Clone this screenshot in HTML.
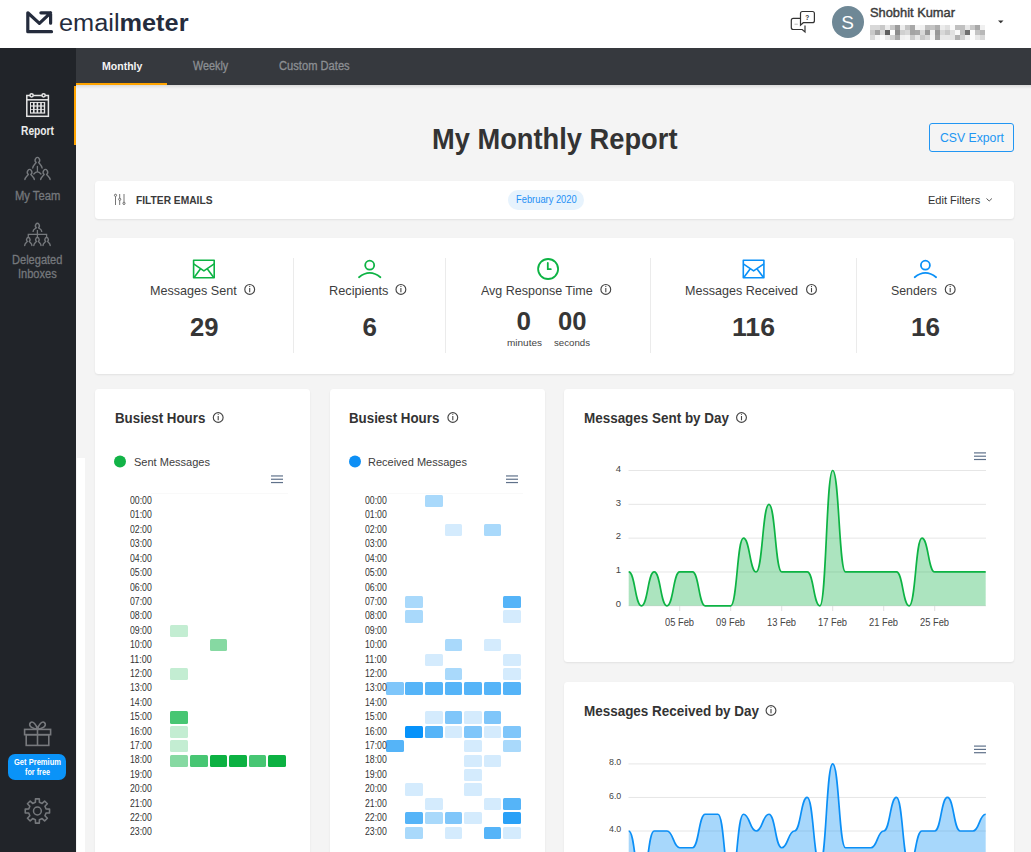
<!DOCTYPE html>
<html><head><meta charset="utf-8"><style>
html,body{margin:0;padding:0;}
body{width:1031px;height:852px;overflow:hidden;position:relative;background:#f4f4f4;font-family:"Liberation Sans",sans-serif;}
.r{position:absolute;}
.t{position:absolute;white-space:nowrap;line-height:1;}
.ov{position:absolute;left:0;top:0;}
</style></head><body>
<div class="r" style="left:0px;top:0px;width:1031px;height:48px;background:#ffffff;"></div>
<div class="r" style="left:0px;top:48px;width:76px;height:804px;background:#212429;"></div>
<div class="r" style="left:76px;top:48px;width:955px;height:36.5px;background:#36393e;"></div>
<div class="r" style="left:76px;top:83px;width:91px;height:2px;background:#ffa400;"></div>
<div class="r" style="left:74px;top:85.8px;width:2px;height:58.8px;background:#ffa400;"></div>
<div class="r" style="left:77px;top:458px;width:8px;height:394px;background:#ffffff;"></div>
<div class="r" style="left:76px;top:85px;width:955px;height:4px;background:linear-gradient(rgba(0,0,0,0.10),rgba(0,0,0,0));"></div>
<div class="r" style="left:95px;top:181px;width:919px;height:38px;background:#fff;border-radius:3.5px;box-shadow:0 1px 2px rgba(0,0,0,0.08);"></div>
<div class="r" style="left:95px;top:238px;width:919px;height:136px;background:#fff;border-radius:3.5px;box-shadow:0 1px 2px rgba(0,0,0,0.08);"></div>
<div class="r" style="left:95px;top:389px;width:215px;height:480px;background:#fff;border-radius:3.5px;box-shadow:0 1px 2px rgba(0,0,0,0.08);"></div>
<div class="r" style="left:330px;top:389px;width:215px;height:480px;background:#fff;border-radius:3.5px;box-shadow:0 1px 2px rgba(0,0,0,0.08);"></div>
<div class="r" style="left:564px;top:389px;width:450px;height:272.5px;background:#fff;border-radius:3.5px;box-shadow:0 1px 2px rgba(0,0,0,0.08);"></div>
<div class="r" style="left:564px;top:682px;width:450px;height:300px;background:#fff;border-radius:3.5px;box-shadow:0 1px 2px rgba(0,0,0,0.08);"></div>
<div class="r" style="left:928.6px;top:123.2px;width:85.4px;height:28.4px;background:transparent;border:1px solid #2196f3;border-radius:3px;box-sizing:border-box;"></div>
<div class="r" style="left:507.6px;top:189.8px;width:76.7px;height:20.2px;background:#e7f3fd;border-radius:10px;"></div>
<div class="r" style="left:8px;top:754px;width:58px;height:26px;background:#0a93f8;border-radius:7px;"></div>
<div class="r" style="left:831.6px;top:5.8px;width:32px;height:32px;background:#6f8896;border-radius:50%;"></div>
<div class="r" style="left:293px;top:258px;width:1px;height:95px;background:#ebebeb;"></div>
<div class="r" style="left:445px;top:258px;width:1px;height:95px;background:#ebebeb;"></div>
<div class="r" style="left:650px;top:258px;width:1px;height:95px;background:#ebebeb;"></div>
<div class="r" style="left:856px;top:258px;width:1px;height:95px;background:#ebebeb;"></div>
<div class="r" style="left:870px;top:25px;width:5px;height:5px;background:#d8d8d8;"></div>
<div class="r" style="left:875px;top:25px;width:5px;height:5px;background:#d8d8d8;"></div>
<div class="r" style="left:880px;top:25px;width:5px;height:5px;background:#c8c8c8;"></div>
<div class="r" style="left:885px;top:25px;width:5px;height:5px;background:#ececec;"></div>
<div class="r" style="left:890px;top:25px;width:5px;height:5px;background:#c8c8c8;"></div>
<div class="r" style="left:895px;top:25px;width:5px;height:5px;background:#9c9c9c;"></div>
<div class="r" style="left:900px;top:25px;width:5px;height:5px;background:#ececec;"></div>
<div class="r" style="left:905px;top:25px;width:5px;height:5px;background:#c4c4c4;"></div>
<div class="r" style="left:910px;top:25px;width:5px;height:5px;background:#a8a8a8;"></div>
<div class="r" style="left:915px;top:25px;width:5px;height:5px;background:#f4f4f4;"></div>
<div class="r" style="left:920px;top:25px;width:5px;height:5px;background:#f0f0f0;"></div>
<div class="r" style="left:925px;top:25px;width:5px;height:5px;background:#c0c0c0;"></div>
<div class="r" style="left:930px;top:25px;width:5px;height:5px;background:#c4c4c4;"></div>
<div class="r" style="left:935px;top:25px;width:5px;height:5px;background:#aeaeae;"></div>
<div class="r" style="left:940px;top:25px;width:5px;height:5px;background:#ececec;"></div>
<div class="r" style="left:945px;top:25px;width:5px;height:5px;background:#e0e0e0;"></div>
<div class="r" style="left:950px;top:25px;width:5px;height:5px;background:#fafafa;"></div>
<div class="r" style="left:955px;top:25px;width:5px;height:5px;background:#c0c0c0;"></div>
<div class="r" style="left:960px;top:25px;width:5px;height:5px;background:#c0c0c0;"></div>
<div class="r" style="left:965px;top:25px;width:5px;height:5px;background:#e8e8e8;"></div>
<div class="r" style="left:970px;top:25px;width:5px;height:5px;background:#c8c8c8;"></div>
<div class="r" style="left:975px;top:25px;width:5px;height:5px;background:#a8a8a8;"></div>
<div class="r" style="left:980px;top:25px;width:5px;height:5px;background:#f0f0f0;"></div>
<div class="r" style="left:870px;top:30px;width:5px;height:5px;background:#c8c8c8;"></div>
<div class="r" style="left:875px;top:30px;width:5px;height:5px;background:#a0a0a0;"></div>
<div class="r" style="left:880px;top:30px;width:5px;height:5px;background:#d8d8d8;"></div>
<div class="r" style="left:885px;top:30px;width:5px;height:5px;background:#606060;"></div>
<div class="r" style="left:890px;top:30px;width:5px;height:5px;background:#fcfcfc;"></div>
<div class="r" style="left:895px;top:30px;width:5px;height:5px;background:#8c8c8c;"></div>
<div class="r" style="left:900px;top:30px;width:5px;height:5px;background:#d0d0d0;"></div>
<div class="r" style="left:905px;top:30px;width:5px;height:5px;background:#d8d8d8;"></div>
<div class="r" style="left:910px;top:30px;width:5px;height:5px;background:#a4a4a4;"></div>
<div class="r" style="left:915px;top:30px;width:5px;height:5px;background:#a8a8a8;"></div>
<div class="r" style="left:920px;top:30px;width:5px;height:5px;background:#d8d8d8;"></div>
<div class="r" style="left:925px;top:30px;width:5px;height:5px;background:#989898;"></div>
<div class="r" style="left:930px;top:30px;width:5px;height:5px;background:#f0f0f0;"></div>
<div class="r" style="left:935px;top:30px;width:5px;height:5px;background:#989898;"></div>
<div class="r" style="left:940px;top:30px;width:5px;height:5px;background:#d8d8d8;"></div>
<div class="r" style="left:945px;top:30px;width:5px;height:5px;background:#c8c8c8;"></div>
<div class="r" style="left:950px;top:30px;width:5px;height:5px;background:#e0e0e0;"></div>
<div class="r" style="left:955px;top:30px;width:5px;height:5px;background:#f8f8f8;"></div>
<div class="r" style="left:960px;top:30px;width:5px;height:5px;background:#c0c0c0;"></div>
<div class="r" style="left:965px;top:30px;width:5px;height:5px;background:#707070;"></div>
<div class="r" style="left:970px;top:30px;width:5px;height:5px;background:#fcfcfc;"></div>
<div class="r" style="left:975px;top:30px;width:5px;height:5px;background:#c4c4c4;"></div>
<div class="r" style="left:980px;top:30px;width:5px;height:5px;background:#b8b8b8;"></div>
<div class="r" style="left:870px;top:35px;width:5px;height:5px;background:#d8d8d8;"></div>
<div class="r" style="left:875px;top:35px;width:5px;height:5px;background:#f4f4f4;"></div>
<div class="r" style="left:880px;top:35px;width:5px;height:5px;background:#fcfcfc;"></div>
<div class="r" style="left:885px;top:35px;width:5px;height:5px;background:#e8e8e8;"></div>
<div class="r" style="left:890px;top:35px;width:5px;height:5px;background:#d0d0d0;"></div>
<div class="r" style="left:895px;top:35px;width:5px;height:5px;background:#a8a8a8;"></div>
<div class="r" style="left:900px;top:35px;width:5px;height:5px;background:#f0f0f0;"></div>
<div class="r" style="left:905px;top:35px;width:5px;height:5px;background:#f4f4f4;"></div>
<div class="r" style="left:910px;top:35px;width:5px;height:5px;background:#cccccc;"></div>
<div class="r" style="left:915px;top:35px;width:5px;height:5px;background:#e8e8e8;"></div>
<div class="r" style="left:920px;top:35px;width:5px;height:5px;background:#c8c8c8;"></div>
<div class="r" style="left:925px;top:35px;width:5px;height:5px;background:#d8d8d8;"></div>
<div class="r" style="left:930px;top:35px;width:5px;height:5px;background:#f4f4f4;"></div>
<div class="r" style="left:935px;top:35px;width:5px;height:5px;background:#a0a0a0;"></div>
<div class="r" style="left:940px;top:35px;width:5px;height:5px;background:#e8e8e8;"></div>
<div class="r" style="left:945px;top:35px;width:5px;height:5px;background:#e8e8e8;"></div>
<div class="r" style="left:950px;top:35px;width:5px;height:5px;background:#e4e4e4;"></div>
<div class="r" style="left:955px;top:35px;width:5px;height:5px;background:#b0b0b0;"></div>
<div class="r" style="left:960px;top:35px;width:5px;height:5px;background:#d0d0d0;"></div>
<div class="r" style="left:965px;top:35px;width:5px;height:5px;background:#f0f0f0;"></div>
<div class="r" style="left:970px;top:35px;width:5px;height:5px;background:#fcfcfc;"></div>
<div class="r" style="left:975px;top:35px;width:5px;height:5px;background:#e8e8e8;"></div>
<div class="r" style="left:980px;top:35px;width:5px;height:5px;background:#d8d8d8;"></div>
<div class="r" style="left:170.25px;top:624.75px;width:17.85px;height:12.4px;background:#c3edd2;border-radius:1.5px;"></div>
<div class="r" style="left:209.5px;top:639.0px;width:17.85px;height:12.4px;background:#86d9a2;border-radius:1.5px;"></div>
<div class="r" style="left:170.25px;top:668.0px;width:17.85px;height:12.4px;background:#c3edd2;border-radius:1.5px;"></div>
<div class="r" style="left:170.25px;top:711.25px;width:17.85px;height:12.4px;background:#47c673;border-radius:1.5px;"></div>
<div class="r" style="left:170.25px;top:725.5px;width:17.85px;height:12.4px;background:#c3edd2;border-radius:1.5px;"></div>
<div class="r" style="left:170.25px;top:740.0px;width:17.85px;height:12.4px;background:#c3edd2;border-radius:1.5px;"></div>
<div class="r" style="left:170.25px;top:754.5px;width:17.85px;height:12.4px;background:#86d9a2;border-radius:1.5px;"></div>
<div class="r" style="left:190.0px;top:754.5px;width:17.85px;height:12.4px;background:#47c673;border-radius:1.5px;"></div>
<div class="r" style="left:209.5px;top:754.5px;width:17.85px;height:12.4px;background:#0cb142;border-radius:1.5px;"></div>
<div class="r" style="left:229.0px;top:754.5px;width:17.85px;height:12.4px;background:#0cb142;border-radius:1.5px;"></div>
<div class="r" style="left:248.5px;top:754.5px;width:17.85px;height:12.4px;background:#47c673;border-radius:1.5px;"></div>
<div class="r" style="left:268.0px;top:754.5px;width:17.85px;height:12.4px;background:#0cb142;border-radius:1.5px;"></div>
<div class="r" style="left:425.0px;top:495.0px;width:17.85px;height:12.4px;background:#a9d9fb;border-radius:1.5px;"></div>
<div class="r" style="left:444.5px;top:523.75px;width:17.85px;height:12.4px;background:#d4ebfd;border-radius:1.5px;"></div>
<div class="r" style="left:483.5px;top:523.75px;width:17.85px;height:12.4px;background:#a9d9fb;border-radius:1.5px;"></div>
<div class="r" style="left:405.25px;top:595.75px;width:17.85px;height:12.4px;background:#a9d9fb;border-radius:1.5px;"></div>
<div class="r" style="left:503.0px;top:595.75px;width:17.85px;height:12.4px;background:#55b4f8;border-radius:1.5px;"></div>
<div class="r" style="left:405.25px;top:610.25px;width:17.85px;height:12.4px;background:#a9d9fb;border-radius:1.5px;"></div>
<div class="r" style="left:503.0px;top:610.25px;width:17.85px;height:12.4px;background:#d4ebfd;border-radius:1.5px;"></div>
<div class="r" style="left:444.5px;top:639.0px;width:17.85px;height:12.4px;background:#a9d9fb;border-radius:1.5px;"></div>
<div class="r" style="left:483.5px;top:639.0px;width:17.85px;height:12.4px;background:#d4ebfd;border-radius:1.5px;"></div>
<div class="r" style="left:425.0px;top:653.5px;width:17.85px;height:12.4px;background:#d4ebfd;border-radius:1.5px;"></div>
<div class="r" style="left:503.0px;top:653.5px;width:17.85px;height:12.4px;background:#d4ebfd;border-radius:1.5px;"></div>
<div class="r" style="left:444.5px;top:668.0px;width:17.85px;height:12.4px;background:#a9d9fb;border-radius:1.5px;"></div>
<div class="r" style="left:503.0px;top:668.0px;width:17.85px;height:12.4px;background:#d4ebfd;border-radius:1.5px;"></div>
<div class="r" style="left:385.75px;top:682.25px;width:17.85px;height:12.4px;background:#7fc6fa;border-radius:1.5px;"></div>
<div class="r" style="left:405.25px;top:682.25px;width:17.85px;height:12.4px;background:#55b4f8;border-radius:1.5px;"></div>
<div class="r" style="left:425.0px;top:682.25px;width:17.85px;height:12.4px;background:#55b4f8;border-radius:1.5px;"></div>
<div class="r" style="left:444.5px;top:682.25px;width:17.85px;height:12.4px;background:#55b4f8;border-radius:1.5px;"></div>
<div class="r" style="left:464.0px;top:682.25px;width:17.85px;height:12.4px;background:#55b4f8;border-radius:1.5px;"></div>
<div class="r" style="left:483.5px;top:682.25px;width:17.85px;height:12.4px;background:#55b4f8;border-radius:1.5px;"></div>
<div class="r" style="left:503.0px;top:682.25px;width:17.85px;height:12.4px;background:#55b4f8;border-radius:1.5px;"></div>
<div class="r" style="left:425.0px;top:711.25px;width:17.85px;height:12.4px;background:#d4ebfd;border-radius:1.5px;"></div>
<div class="r" style="left:444.5px;top:711.25px;width:17.85px;height:12.4px;background:#7fc6fa;border-radius:1.5px;"></div>
<div class="r" style="left:464.0px;top:711.25px;width:17.85px;height:12.4px;background:#d4ebfd;border-radius:1.5px;"></div>
<div class="r" style="left:483.5px;top:711.25px;width:17.85px;height:12.4px;background:#7fc6fa;border-radius:1.5px;"></div>
<div class="r" style="left:405.25px;top:725.5px;width:17.85px;height:12.4px;background:#0692fa;border-radius:1.5px;"></div>
<div class="r" style="left:425.0px;top:725.5px;width:17.85px;height:12.4px;background:#55b4f8;border-radius:1.5px;"></div>
<div class="r" style="left:444.5px;top:725.5px;width:17.85px;height:12.4px;background:#d4ebfd;border-radius:1.5px;"></div>
<div class="r" style="left:464.0px;top:725.5px;width:17.85px;height:12.4px;background:#7fc6fa;border-radius:1.5px;"></div>
<div class="r" style="left:483.5px;top:725.5px;width:17.85px;height:12.4px;background:#d4ebfd;border-radius:1.5px;"></div>
<div class="r" style="left:503.0px;top:725.5px;width:17.85px;height:12.4px;background:#7fc6fa;border-radius:1.5px;"></div>
<div class="r" style="left:385.75px;top:740.0px;width:17.85px;height:12.4px;background:#55b4f8;border-radius:1.5px;"></div>
<div class="r" style="left:464.0px;top:740.0px;width:17.85px;height:12.4px;background:#d4ebfd;border-radius:1.5px;"></div>
<div class="r" style="left:503.0px;top:740.0px;width:17.85px;height:12.4px;background:#a9d9fb;border-radius:1.5px;"></div>
<div class="r" style="left:464.0px;top:754.5px;width:17.85px;height:12.4px;background:#d4ebfd;border-radius:1.5px;"></div>
<div class="r" style="left:483.5px;top:754.5px;width:17.85px;height:12.4px;background:#d4ebfd;border-radius:1.5px;"></div>
<div class="r" style="left:464.0px;top:768.75px;width:17.85px;height:12.4px;background:#d4ebfd;border-radius:1.5px;"></div>
<div class="r" style="left:405.25px;top:783.25px;width:17.85px;height:12.4px;background:#d4ebfd;border-radius:1.5px;"></div>
<div class="r" style="left:464.0px;top:783.25px;width:17.85px;height:12.4px;background:#d4ebfd;border-radius:1.5px;"></div>
<div class="r" style="left:425.0px;top:797.5px;width:17.85px;height:12.4px;background:#d4ebfd;border-radius:1.5px;"></div>
<div class="r" style="left:483.5px;top:797.5px;width:17.85px;height:12.4px;background:#d4ebfd;border-radius:1.5px;"></div>
<div class="r" style="left:503.0px;top:797.5px;width:17.85px;height:12.4px;background:#55b4f8;border-radius:1.5px;"></div>
<div class="r" style="left:405.25px;top:812.0px;width:17.85px;height:12.4px;background:#55b4f8;border-radius:1.5px;"></div>
<div class="r" style="left:425.0px;top:812.0px;width:17.85px;height:12.4px;background:#a9d9fb;border-radius:1.5px;"></div>
<div class="r" style="left:444.5px;top:812.0px;width:17.85px;height:12.4px;background:#7fc6fa;border-radius:1.5px;"></div>
<div class="r" style="left:464.0px;top:812.0px;width:17.85px;height:12.4px;background:#d4ebfd;border-radius:1.5px;"></div>
<div class="r" style="left:503.0px;top:812.0px;width:17.85px;height:12.4px;background:#2aa1f7;border-radius:1.5px;"></div>
<div class="r" style="left:405.25px;top:826.5px;width:17.85px;height:12.4px;background:#a9d9fb;border-radius:1.5px;"></div>
<div class="r" style="left:444.5px;top:826.5px;width:17.85px;height:12.4px;background:#d4ebfd;border-radius:1.5px;"></div>
<div class="r" style="left:483.5px;top:826.5px;width:17.85px;height:12.4px;background:#55b4f8;border-radius:1.5px;"></div>
<div class="r" style="left:503.0px;top:826.5px;width:17.85px;height:12.4px;background:#d4ebfd;border-radius:1.5px;"></div>
<div class="r" style="left:150.5px;top:493px;width:137px;height:1px;background:#f9f9f9;"></div>
<div class="r" style="left:385.5px;top:493px;width:137px;height:1px;background:#f9f9f9;"></div>
<svg class="ov" width="1031" height="852" viewBox="0 0 1031 852"><line x1="628.5" y1="470.5" x2="986" y2="470.5" stroke="#e6e6e6" stroke-width="1"/>
<line x1="628.5" y1="504.325" x2="986" y2="504.325" stroke="#e6e6e6" stroke-width="1"/>
<line x1="628.5" y1="538.15" x2="986" y2="538.15" stroke="#e6e6e6" stroke-width="1"/>
<line x1="628.5" y1="571.975" x2="986" y2="571.975" stroke="#e6e6e6" stroke-width="1"/>
<line x1="628.5" y1="605.8" x2="986" y2="605.8" stroke="#e6e6e6" stroke-width="1"/>
<line x1="679.7" y1="606" x2="679.7" y2="611" stroke="#e0e0e0" stroke-width="1"/>
<line x1="730.7" y1="606" x2="730.7" y2="611" stroke="#e0e0e0" stroke-width="1"/>
<line x1="781.7" y1="606" x2="781.7" y2="611" stroke="#e0e0e0" stroke-width="1"/>
<line x1="832.7" y1="606" x2="832.7" y2="611" stroke="#e0e0e0" stroke-width="1"/>
<line x1="883.7" y1="606" x2="883.7" y2="611" stroke="#e0e0e0" stroke-width="1"/>
<line x1="934.7" y1="606" x2="934.7" y2="611" stroke="#e0e0e0" stroke-width="1"/>
<path d="M628.70,571.97 C635.08,571.97 635.08,605.80 641.45,605.80 C647.83,605.80 647.83,571.97 654.20,571.97 C660.58,571.97 660.58,605.80 666.95,605.80 C673.33,605.80 673.33,571.97 679.70,571.97 C686.08,571.97 686.08,571.97 692.45,571.97 C698.83,571.97 698.83,605.80 705.20,605.80 C711.58,605.80 711.58,605.80 717.95,605.80 C724.33,605.80 724.33,605.80 730.70,605.80 C737.08,605.80 737.08,538.15 743.45,538.15 C749.83,538.15 749.83,571.97 756.20,571.97 C762.58,571.97 762.58,504.32 768.95,504.32 C775.33,504.32 775.33,571.97 781.70,571.97 C788.08,571.97 788.08,571.97 794.45,571.97 C800.83,571.97 800.83,571.97 807.20,571.97 C813.58,571.97 813.58,605.80 819.95,605.80 C826.33,605.80 826.33,470.50 832.70,470.50 C839.08,470.50 839.08,571.97 845.45,571.97 C851.83,571.97 851.83,571.97 858.20,571.97 C864.58,571.97 864.58,571.97 870.95,571.97 C877.33,571.97 877.33,571.97 883.70,571.97 C890.08,571.97 890.08,571.97 896.45,571.97 C902.83,571.97 902.83,605.80 909.20,605.80 C915.58,605.80 915.58,538.15 921.95,538.15 C928.33,538.15 928.33,571.97 934.70,571.97 C941.08,571.97 941.08,571.97 947.45,571.97 C953.83,571.97 953.83,571.97 960.20,571.97 C966.58,571.97 966.58,571.97 972.95,571.97 C979.33,571.97 979.33,571.97 985.70,571.97 L985.7,605.8 L628.7,605.8 Z" fill="#12b347" fill-opacity="0.35"/>
<path d="M628.70,571.97 C635.08,571.97 635.08,605.80 641.45,605.80 C647.83,605.80 647.83,571.97 654.20,571.97 C660.58,571.97 660.58,605.80 666.95,605.80 C673.33,605.80 673.33,571.97 679.70,571.97 C686.08,571.97 686.08,571.97 692.45,571.97 C698.83,571.97 698.83,605.80 705.20,605.80 C711.58,605.80 711.58,605.80 717.95,605.80 C724.33,605.80 724.33,605.80 730.70,605.80 C737.08,605.80 737.08,538.15 743.45,538.15 C749.83,538.15 749.83,571.97 756.20,571.97 C762.58,571.97 762.58,504.32 768.95,504.32 C775.33,504.32 775.33,571.97 781.70,571.97 C788.08,571.97 788.08,571.97 794.45,571.97 C800.83,571.97 800.83,571.97 807.20,571.97 C813.58,571.97 813.58,605.80 819.95,605.80 C826.33,605.80 826.33,470.50 832.70,470.50 C839.08,470.50 839.08,571.97 845.45,571.97 C851.83,571.97 851.83,571.97 858.20,571.97 C864.58,571.97 864.58,571.97 870.95,571.97 C877.33,571.97 877.33,571.97 883.70,571.97 C890.08,571.97 890.08,571.97 896.45,571.97 C902.83,571.97 902.83,605.80 909.20,605.80 C915.58,605.80 915.58,538.15 921.95,538.15 C928.33,538.15 928.33,571.97 934.70,571.97 C941.08,571.97 941.08,571.97 947.45,571.97 C953.83,571.97 953.83,571.97 960.20,571.97 C966.58,571.97 966.58,571.97 972.95,571.97 C979.33,571.97 979.33,571.97 985.70,571.97" fill="none" stroke="#0db344" stroke-width="1.7"/>
<line x1="628.5" y1="763.9" x2="986" y2="763.9" stroke="#e6e6e6" stroke-width="1"/>
<line x1="628.5" y1="797.4499999999999" x2="986" y2="797.4499999999999" stroke="#e6e6e6" stroke-width="1"/>
<line x1="628.5" y1="831.0" x2="986" y2="831.0" stroke="#e6e6e6" stroke-width="1"/>
<line x1="628.5" y1="864.55" x2="986" y2="864.55" stroke="#e6e6e6" stroke-width="1"/>
<path d="M628.70,831.00 C635.08,831.00 635.08,881.32 641.45,881.32 C647.83,881.32 647.83,831.00 654.20,831.00 C660.58,831.00 660.58,831.00 666.95,831.00 C673.33,831.00 673.33,847.77 679.70,847.77 C686.08,847.77 686.08,847.77 692.45,847.77 C698.83,847.77 698.83,814.23 705.20,814.23 C711.58,814.23 711.58,814.23 717.95,814.23 C724.33,814.23 724.33,881.32 730.70,881.32 C737.08,881.32 737.08,814.23 743.45,814.23 C749.83,814.23 749.83,831.00 756.20,831.00 C762.58,831.00 762.58,814.23 768.95,814.23 C775.33,814.23 775.33,847.77 781.70,847.77 C788.08,847.77 788.08,831.00 794.45,831.00 C800.83,831.00 800.83,797.45 807.20,797.45 C813.58,797.45 813.58,864.55 819.95,864.55 C826.33,864.55 826.33,763.90 832.70,763.90 C839.08,763.90 839.08,847.77 845.45,847.77 C851.83,847.77 851.83,847.77 858.20,847.77 C864.58,847.77 864.58,847.77 870.95,847.77 C877.33,847.77 877.33,831.00 883.70,831.00 C890.08,831.00 890.08,797.45 896.45,797.45 C902.83,797.45 902.83,864.55 909.20,864.55 C915.58,864.55 915.58,831.00 921.95,831.00 C928.33,831.00 928.33,831.00 934.70,831.00 C941.08,831.00 941.08,797.45 947.45,797.45 C953.83,797.45 953.83,831.00 960.20,831.00 C966.58,831.00 966.58,831.00 972.95,831.00 C979.33,831.00 979.33,814.23 985.70,814.23 L985.7,900 L628.7,900 Z" fill="#0a8ff5" fill-opacity="0.36"/>
<path d="M628.70,831.00 C635.08,831.00 635.08,881.32 641.45,881.32 C647.83,881.32 647.83,831.00 654.20,831.00 C660.58,831.00 660.58,831.00 666.95,831.00 C673.33,831.00 673.33,847.77 679.70,847.77 C686.08,847.77 686.08,847.77 692.45,847.77 C698.83,847.77 698.83,814.23 705.20,814.23 C711.58,814.23 711.58,814.23 717.95,814.23 C724.33,814.23 724.33,881.32 730.70,881.32 C737.08,881.32 737.08,814.23 743.45,814.23 C749.83,814.23 749.83,831.00 756.20,831.00 C762.58,831.00 762.58,814.23 768.95,814.23 C775.33,814.23 775.33,847.77 781.70,847.77 C788.08,847.77 788.08,831.00 794.45,831.00 C800.83,831.00 800.83,797.45 807.20,797.45 C813.58,797.45 813.58,864.55 819.95,864.55 C826.33,864.55 826.33,763.90 832.70,763.90 C839.08,763.90 839.08,847.77 845.45,847.77 C851.83,847.77 851.83,847.77 858.20,847.77 C864.58,847.77 864.58,847.77 870.95,847.77 C877.33,847.77 877.33,831.00 883.70,831.00 C890.08,831.00 890.08,797.45 896.45,797.45 C902.83,797.45 902.83,864.55 909.20,864.55 C915.58,864.55 915.58,831.00 921.95,831.00 C928.33,831.00 928.33,831.00 934.70,831.00 C941.08,831.00 941.08,797.45 947.45,797.45 C953.83,797.45 953.83,831.00 960.20,831.00 C966.58,831.00 966.58,831.00 972.95,831.00 C979.33,831.00 979.33,814.23 985.70,814.23" fill="none" stroke="#0b8ff6" stroke-width="1.7"/>
<line x1="271" y1="475.95" x2="283" y2="475.95" stroke="#5f718a" stroke-width="1.2"/>
<line x1="271" y1="479.25" x2="283" y2="479.25" stroke="#5f718a" stroke-width="1.2"/>
<line x1="271" y1="482.55" x2="283" y2="482.55" stroke="#5f718a" stroke-width="1.2"/>
<line x1="506" y1="475.95" x2="518" y2="475.95" stroke="#5f718a" stroke-width="1.2"/>
<line x1="506" y1="479.25" x2="518" y2="479.25" stroke="#5f718a" stroke-width="1.2"/>
<line x1="506" y1="482.55" x2="518" y2="482.55" stroke="#5f718a" stroke-width="1.2"/>
<line x1="974" y1="452.90" x2="986" y2="452.90" stroke="#5f718a" stroke-width="1.2"/>
<line x1="974" y1="456.20" x2="986" y2="456.20" stroke="#5f718a" stroke-width="1.2"/>
<line x1="974" y1="459.50" x2="986" y2="459.50" stroke="#5f718a" stroke-width="1.2"/>
<line x1="974" y1="746.10" x2="986" y2="746.10" stroke="#5f718a" stroke-width="1.2"/>
<line x1="974" y1="749.40" x2="986" y2="749.40" stroke="#5f718a" stroke-width="1.2"/>
<line x1="974" y1="752.70" x2="986" y2="752.70" stroke="#5f718a" stroke-width="1.2"/>
<circle cx="120" cy="461.5" r="6" fill="#12b347"/>
<circle cx="355" cy="461.5" r="6" fill="#0d8ff5"/>
<path d="M51.5,31.7 L27.8,31.7 L27.8,12.8 L39.4,23.4 L50.6,12.8 M40.9,12.8 L50.6,12.8 L50.6,23.2" fill="none" stroke="#252c3d" stroke-width="3.2" stroke-linecap="round" stroke-linejoin="round"/>
<path d="M802.5,11.5 H812.4 Q814.4,11.5 814.4,13.5 V20.7 Q814.4,22.7 812.4,22.7 H803.3 L800.5,25.2 V13.5 Q800.5,11.5 802.5,11.5 Z" fill="#fff" stroke="#333" stroke-width="1.2"/>
<path d="M800.5,18.4 H793.3 Q791.3,18.4 791.3,20.4 V27.5 Q791.3,29.5 793.3,29.5 H802.2 L805,31.9 V25.5" fill="none" stroke="#333" stroke-width="1.2"/>
<text x="807.3" y="19.7" font-family="Liberation Sans" font-size="6.5" font-weight="700" fill="#333" text-anchor="middle">?</text>
<line x1="794.5" y1="24.2" x2="797.8" y2="24.2" stroke="#bbb" stroke-width="1"/>
<path d="M998,20.5 L1003.5,20.5 L1000.75,23.3 Z" fill="#333"/>
<g fill="none" stroke="#e6e6e6" stroke-width="1.5"><rect x="26.8" y="95.5" width="21.6" height="20.8"/><line x1="26.8" y1="99.8" x2="48.4" y2="99.8"/><circle cx="31.6" cy="95.3" r="1.6" fill="#212429"/><circle cx="43.6" cy="95.3" r="1.6" fill="#212429"/></g>
<rect x="30" y="102" width="15.2" height="11.6" fill="#e6e6e6"/>
<rect x="31.0" y="102.9" width="2.0" height="2.5" fill="#212429"/>
<rect x="31.0" y="106.60000000000001" width="2.0" height="2.5" fill="#212429"/>
<rect x="31.0" y="109.9" width="2.0" height="2.5" fill="#212429"/>
<rect x="34.6" y="102.9" width="2.0" height="2.5" fill="#212429"/>
<rect x="34.6" y="106.60000000000001" width="2.0" height="2.5" fill="#212429"/>
<rect x="34.6" y="109.9" width="2.0" height="2.5" fill="#212429"/>
<rect x="38.2" y="102.9" width="2.0" height="2.5" fill="#212429"/>
<rect x="38.2" y="106.60000000000001" width="2.0" height="2.5" fill="#212429"/>
<rect x="38.2" y="109.9" width="2.0" height="2.5" fill="#212429"/>
<rect x="41.8" y="102.9" width="2.0" height="2.5" fill="#212429"/>
<rect x="41.8" y="106.60000000000001" width="2.0" height="2.5" fill="#212429"/>
<rect x="41.8" y="109.9" width="2.0" height="2.5" fill="#212429"/>
<path d="M32.70,168.00 C32.70,165.80 35.29,163.76 36.08,162.56 A2.2,2.86 0 1 1 38.72,162.56 C39.51,163.76 42.10,165.80 42.10,168.00" fill="none" stroke="#76797d" stroke-width="1.4" stroke-linecap="round"/>
<path d="M24.90,179.60 C24.90,177.40 27.49,175.76 28.28,174.56 A2.2,2.86 0 1 1 30.92,174.56 C31.71,175.76 34.30,177.40 34.30,179.60" fill="none" stroke="#76797d" stroke-width="1.4" stroke-linecap="round"/>
<path d="M40.70,179.60 C40.70,177.40 43.29,175.76 44.08,174.56 A2.2,2.86 0 1 1 46.72,174.56 C47.51,175.76 50.10,177.40 50.10,179.60" fill="none" stroke="#76797d" stroke-width="1.4" stroke-linecap="round"/>
<path d="M37.4,166.5 V171.8 M33.8,174 Q35.6,171.8 37.4,171.8 Q39.2,171.8 41,174" fill="none" stroke="#76797d" stroke-width="1.3" stroke-linecap="round"/>
<path d="M33.10,231.40 C33.10,229.20 35.58,228.87 36.26,227.67 A1.9,2.47 0 1 1 38.54,227.67 C39.22,228.87 41.70,229.20 41.70,231.40" fill="none" stroke="#76797d" stroke-width="1.4" stroke-linecap="round"/>
<path d="M37.4,230 V237.5 M28.3,237.8 V234.4 H46.6 V237.8" fill="none" stroke="#76797d" stroke-width="1.3"/>
<path d="M24.70,245.60 C24.70,243.40 26.67,242.61 27.28,241.41 A1.7,2.21 0 1 1 29.32,241.41 C29.93,242.61 31.90,243.40 31.90,245.60" fill="none" stroke="#76797d" stroke-width="1.4" stroke-linecap="round"/>
<path d="M33.80,245.60 C33.80,243.40 35.77,242.61 36.38,241.41 A1.7,2.21 0 1 1 38.42,241.41 C39.03,242.61 41.00,243.40 41.00,245.60" fill="none" stroke="#76797d" stroke-width="1.4" stroke-linecap="round"/>
<path d="M43.00,245.60 C43.00,243.40 44.97,242.61 45.58,241.41 A1.7,2.21 0 1 1 47.62,241.41 C48.23,242.61 50.20,243.40 50.20,245.60" fill="none" stroke="#76797d" stroke-width="1.4" stroke-linecap="round"/>
<g fill="none" stroke="#77797d" stroke-width="1.6"><rect x="24.6" y="729.4" width="26" height="5.3"/><rect x="26.2" y="734.7" width="22.6" height="10.7"/><line x1="37.5" y1="729.4" x2="37.5" y2="745.4"/><path d="M37.5,729.2 C33,729 27.5,726 30.5,722.6 C33,720.5 36.5,725 37.5,729.2 C38.5,725 42,720.5 44.5,722.6 C47.5,726 42,729 37.5,729.2"/></g>
<path d="M49.55,809.08 L49.55,812.92 L46.07,813.01 L44.95,815.71 L47.35,818.23 L44.63,820.95 L42.11,818.55 L39.41,819.67 L39.32,823.15 L35.48,823.15 L35.39,819.67 L32.69,818.55 L30.17,820.95 L27.45,818.23 L29.85,815.71 L28.73,813.01 L25.25,812.92 L25.25,809.08 L28.73,808.99 L29.85,806.29 L27.45,803.77 L30.17,801.05 L32.69,803.45 L35.39,802.33 L35.48,798.85 L39.32,798.85 L39.41,802.33 L42.11,803.45 L44.63,801.05 L47.35,803.77 L44.95,806.29 L46.07,808.99 Z" fill="none" stroke="#75787c" stroke-width="1.6" stroke-linejoin="round" transform="rotate(-90 37.4 811)"/>
<circle cx="37.4" cy="811" r="3.9" fill="none" stroke="#75787c" stroke-width="1.5"/>
<g fill="none" stroke="#0db344" stroke-width="1.6" stroke-linejoin="round"><rect x="193.60" y="260.2" width="20.6" height="17.6"/><path d="M193.60,263.8 L203.90,270.9 L214.20,263.8 M194.10,277.4 L200.20,269.2 M213.70,277.4 L207.60,269.2"/></g>
<g fill="none" stroke="#0a90f7" stroke-width="1.6" stroke-linejoin="round"><rect x="743.30" y="260.2" width="20.6" height="17.6"/><path d="M743.30,263.8 L753.60,270.9 L763.90,263.8 M743.80,277.4 L749.90,269.2 M763.40,277.4 L757.30,269.2"/></g>
<g fill="none" stroke="#0db344" stroke-width="1.8" stroke-linecap="round"><circle cx="369.7" cy="265.2" r="4.5"/><path d="M359,277.2 Q369.7,268.5 380.4,277.2"/></g>
<g fill="none" stroke="#0a90f7" stroke-width="1.8" stroke-linecap="round"><circle cx="925.4" cy="265.2" r="4.5"/><path d="M914.7,277.2 Q925.4,268.5 936.1,277.2"/></g>
<g fill="none" stroke="#0db344" stroke-width="1.8" stroke-linecap="round"><circle cx="548.1" cy="269" r="10"/><path d="M547.8,263 V269.2 H550.8"/></g>
<circle cx="249.7" cy="289.4" r="4.9" fill="none" stroke="#444" stroke-width="1.15"/>
<line x1="249.7" y1="287.9" x2="249.7" y2="292.2" stroke="#444" stroke-width="1.1"/>
<circle cx="249.7" cy="286.4" r="0.6" fill="#444"/>
<circle cx="400.9" cy="289.4" r="4.9" fill="none" stroke="#444" stroke-width="1.15"/>
<line x1="400.9" y1="287.9" x2="400.9" y2="292.2" stroke="#444" stroke-width="1.1"/>
<circle cx="400.9" cy="286.4" r="0.6" fill="#444"/>
<circle cx="605.8" cy="289.4" r="4.9" fill="none" stroke="#444" stroke-width="1.15"/>
<line x1="605.8" y1="287.9" x2="605.8" y2="292.2" stroke="#444" stroke-width="1.1"/>
<circle cx="605.8" cy="286.4" r="0.6" fill="#444"/>
<circle cx="811.5" cy="289.4" r="4.9" fill="none" stroke="#444" stroke-width="1.15"/>
<line x1="811.5" y1="287.9" x2="811.5" y2="292.2" stroke="#444" stroke-width="1.1"/>
<circle cx="811.5" cy="286.4" r="0.6" fill="#444"/>
<circle cx="950.2" cy="289.4" r="4.9" fill="none" stroke="#444" stroke-width="1.15"/>
<line x1="950.2" y1="287.9" x2="950.2" y2="292.2" stroke="#444" stroke-width="1.1"/>
<circle cx="950.2" cy="286.4" r="0.6" fill="#444"/>
<circle cx="218.2" cy="417.5" r="4.9" fill="none" stroke="#444" stroke-width="1.15"/>
<line x1="218.2" y1="416.0" x2="218.2" y2="420.3" stroke="#444" stroke-width="1.1"/>
<circle cx="218.2" cy="414.5" r="0.6" fill="#444"/>
<circle cx="452.8" cy="417.5" r="4.9" fill="none" stroke="#444" stroke-width="1.15"/>
<line x1="452.8" y1="416.0" x2="452.8" y2="420.3" stroke="#444" stroke-width="1.1"/>
<circle cx="452.8" cy="414.5" r="0.6" fill="#444"/>
<circle cx="741.5" cy="417.5" r="4.9" fill="none" stroke="#444" stroke-width="1.15"/>
<line x1="741.5" y1="416.0" x2="741.5" y2="420.3" stroke="#444" stroke-width="1.1"/>
<circle cx="741.5" cy="414.5" r="0.6" fill="#444"/>
<circle cx="771" cy="710.5" r="4.9" fill="none" stroke="#444" stroke-width="1.15"/>
<line x1="771" y1="709.0" x2="771" y2="713.3" stroke="#444" stroke-width="1.1"/>
<circle cx="771" cy="707.5" r="0.6" fill="#444"/>
<g stroke="#666" stroke-width="0.9" fill="#fff"><line x1="115.5" y1="194" x2="115.5" y2="205"/><line x1="119.7" y1="194" x2="119.7" y2="205"/><line x1="124" y1="194" x2="124" y2="205"/><circle cx="115.5" cy="195.3" r="1.1"/><circle cx="119.7" cy="199.3" r="1.1"/><circle cx="124" cy="203.3" r="1.1"/></g>
<path d="M986.5,198.5 L989.2,201 L991.9,198.5" fill="none" stroke="#555" stroke-width="1"/></svg>
<div class="t" style="left:59.00px;top:11.90px;font-size:23px;font-weight:400;color:#252c3d;letter-spacing:0.000px;transform:scaleX(1.1010);transform-origin:0 0;"><span style="font-weight:400">email</span><span style="font-weight:700">meter</span></div><div class="t" style="left:870.00px;top:5.99px;font-size:13.5px;font-weight:400;color:#3c3c3c;letter-spacing:0.000px;transform:scaleX(0.9517);transform-origin:0 0;-webkit-text-stroke:0.45px currentColor;">Shobhit Kumar</div><div class="t" style="left:841.26px;top:12.52px;font-size:19px;font-weight:400;color:#fff;letter-spacing:0.000px;">S</div><div class="t" style="left:101.60px;top:60.75px;font-size:11.5px;font-weight:700;color:#f4f4f4;letter-spacing:0.000px;transform:scaleX(0.9166);transform-origin:0 0;">Monthly</div><div class="t" style="left:192.80px;top:60.23px;font-size:12px;font-weight:400;color:#8c8f93;letter-spacing:0.000px;transform:scaleX(0.8997);transform-origin:0 0;-webkit-text-stroke:0.3px currentColor;">Weekly</div><div class="t" style="left:279.30px;top:60.23px;font-size:12px;font-weight:400;color:#8c8f93;letter-spacing:0.000px;transform:scaleX(0.9299);transform-origin:0 0;-webkit-text-stroke:0.3px currentColor;">Custom Dates</div><div class="t" style="left:20.70px;top:125.03px;font-size:12px;font-weight:700;color:#ececec;letter-spacing:0.000px;transform:scaleX(0.8533);transform-origin:0 0;">Report</div><div class="t" style="left:14.65px;top:190.03px;font-size:12px;font-weight:400;color:#75787c;letter-spacing:0.000px;transform:scaleX(0.9346);transform-origin:0 0;-webkit-text-stroke:0.3px currentColor;">My Team</div><div class="t" style="left:11.60px;top:254.03px;font-size:12px;font-weight:400;color:#75787c;letter-spacing:0.000px;transform:scaleX(0.9211);transform-origin:0 0;-webkit-text-stroke:0.3px currentColor;">Delegated</div><div class="t" style="left:17.55px;top:267.73px;font-size:12px;font-weight:400;color:#75787c;letter-spacing:0.000px;transform:scaleX(0.9207);transform-origin:0 0;-webkit-text-stroke:0.3px currentColor;">Inboxes</div><div class="t" style="left:13.50px;top:758.03px;font-size:9px;font-weight:700;color:#ffffff;letter-spacing:0.000px;transform:scaleX(0.8388);transform-origin:0 0;">Get Premium</div><div class="t" style="left:24.50px;top:768.13px;font-size:9px;font-weight:700;color:#ffffff;letter-spacing:0.000px;transform:scaleX(0.8060);transform-origin:0 0;">for free</div><div class="t" style="left:432.00px;top:124.92px;font-size:29px;font-weight:700;color:#333333;letter-spacing:0.000px;transform:scaleX(0.9406);transform-origin:0 0;">My Monthly Report</div><div class="t" style="left:939.60px;top:131.10px;font-size:13px;font-weight:400;color:#2196f3;letter-spacing:0.000px;transform:scaleX(0.9408);transform-origin:0 0;">CSV Export</div><div class="t" style="left:135.50px;top:195.00px;font-size:10.6px;font-weight:700;color:#3a3a3a;letter-spacing:0.000px;transform:scaleX(0.9651);transform-origin:0 0;">FILTER EMAILS</div><div class="t" style="left:516.00px;top:194.69px;font-size:10px;font-weight:400;color:#1e90f5;letter-spacing:0.000px;transform:scaleX(0.9332);transform-origin:0 0;">February 2020</div><div class="t" style="left:927.80px;top:194.65px;font-size:11.5px;font-weight:400;color:#333333;letter-spacing:0.000px;transform:scaleX(0.9608);transform-origin:0 0;">Edit Filters</div><div class="t" style="left:149.60px;top:284.20px;font-size:13px;font-weight:400;color:#3d3d3d;letter-spacing:0.000px;transform:scaleX(0.9675);transform-origin:0 0;">Messages Sent</div><div class="t" style="left:329.00px;top:284.20px;font-size:13px;font-weight:400;color:#3d3d3d;letter-spacing:0.000px;transform:scaleX(0.9802);transform-origin:0 0;">Recipients</div><div class="t" style="left:481.30px;top:284.20px;font-size:13px;font-weight:400;color:#3d3d3d;letter-spacing:0.000px;transform:scaleX(0.9620);transform-origin:0 0;">Avg Response Time</div><div class="t" style="left:685.00px;top:284.20px;font-size:13px;font-weight:400;color:#3d3d3d;letter-spacing:0.000px;transform:scaleX(0.9653);transform-origin:0 0;">Messages Received</div><div class="t" style="left:891.00px;top:284.20px;font-size:13px;font-weight:400;color:#3d3d3d;letter-spacing:0.000px;transform:scaleX(0.9500);transform-origin:0 0;">Senders</div><div class="t" style="left:189.75px;top:313.61px;font-size:26px;font-weight:700;color:#363636;letter-spacing:0.000px;transform:scaleX(0.9854);transform-origin:0 0;">29</div><div class="t" style="left:362.57px;top:313.61px;font-size:26px;font-weight:700;color:#363636;letter-spacing:0.000px;">6</div><div class="t" style="left:516.47px;top:307.81px;font-size:26px;font-weight:700;color:#363636;letter-spacing:0.000px;">0</div><div class="t" style="left:557.75px;top:307.81px;font-size:26px;font-weight:700;color:#363636;letter-spacing:0.000px;transform:scaleX(0.9854);transform-origin:0 0;">00</div><div class="t" style="left:506.50px;top:338.11px;font-size:9.5px;font-weight:400;color:#444;letter-spacing:0.000px;transform:scaleX(1.0521);transform-origin:0 0;">minutes</div><div class="t" style="left:554.00px;top:338.11px;font-size:9.5px;font-weight:400;color:#444;letter-spacing:0.000px;transform:scaleX(1.0172);transform-origin:0 0;">seconds</div><div class="t" style="left:732.00px;top:313.61px;font-size:26px;font-weight:700;color:#363636;letter-spacing:0.000px;transform:scaleX(1.0250);transform-origin:0 0;">116</div><div class="t" style="left:911.00px;top:313.61px;font-size:26px;font-weight:700;color:#363636;letter-spacing:0.000px;transform:scaleX(1.0027);transform-origin:0 0;">16</div><div class="t" style="left:114.60px;top:411.37px;font-size:14px;font-weight:700;color:#333333;letter-spacing:0.000px;transform:scaleX(0.9513);transform-origin:0 0;">Busiest Hours</div><div class="t" style="left:349.00px;top:411.37px;font-size:14px;font-weight:700;color:#333333;letter-spacing:0.000px;transform:scaleX(0.9513);transform-origin:0 0;">Busiest Hours</div><div class="t" style="left:583.80px;top:411.37px;font-size:14px;font-weight:700;color:#333333;letter-spacing:0.000px;transform:scaleX(0.9605);transform-origin:0 0;">Messages Sent by Day</div><div class="t" style="left:583.80px;top:704.07px;font-size:14px;font-weight:700;color:#333333;letter-spacing:0.000px;transform:scaleX(0.9610);transform-origin:0 0;">Messages Received by Day</div><div class="t" style="left:133.70px;top:456.85px;font-size:11.5px;font-weight:400;color:#3d3d3d;letter-spacing:0.000px;transform:scaleX(0.9588);transform-origin:0 0;">Sent Messages</div><div class="t" style="left:368.00px;top:456.85px;font-size:11.5px;font-weight:400;color:#3d3d3d;letter-spacing:0.000px;transform:scaleX(0.9559);transform-origin:0 0;">Received Messages</div><div class="t" style="left:129.90px;top:496.05px;font-size:10.3px;font-weight:400;color:#333333;letter-spacing:0.000px;transform:scaleX(0.8456);transform-origin:0 0;">00:00</div><div class="t" style="left:129.90px;top:510.46px;font-size:10.3px;font-weight:400;color:#333333;letter-spacing:0.000px;transform:scaleX(0.8456);transform-origin:0 0;">01:00</div><div class="t" style="left:129.90px;top:524.87px;font-size:10.3px;font-weight:400;color:#333333;letter-spacing:0.000px;transform:scaleX(0.8456);transform-origin:0 0;">02:00</div><div class="t" style="left:129.90px;top:539.28px;font-size:10.3px;font-weight:400;color:#333333;letter-spacing:0.000px;transform:scaleX(0.8456);transform-origin:0 0;">03:00</div><div class="t" style="left:129.90px;top:553.69px;font-size:10.3px;font-weight:400;color:#333333;letter-spacing:0.000px;transform:scaleX(0.8456);transform-origin:0 0;">04:00</div><div class="t" style="left:129.90px;top:568.10px;font-size:10.3px;font-weight:400;color:#333333;letter-spacing:0.000px;transform:scaleX(0.8456);transform-origin:0 0;">05:00</div><div class="t" style="left:129.90px;top:582.51px;font-size:10.3px;font-weight:400;color:#333333;letter-spacing:0.000px;transform:scaleX(0.8456);transform-origin:0 0;">06:00</div><div class="t" style="left:129.90px;top:596.92px;font-size:10.3px;font-weight:400;color:#333333;letter-spacing:0.000px;transform:scaleX(0.8456);transform-origin:0 0;">07:00</div><div class="t" style="left:129.90px;top:611.33px;font-size:10.3px;font-weight:400;color:#333333;letter-spacing:0.000px;transform:scaleX(0.8456);transform-origin:0 0;">08:00</div><div class="t" style="left:129.90px;top:625.74px;font-size:10.3px;font-weight:400;color:#333333;letter-spacing:0.000px;transform:scaleX(0.8456);transform-origin:0 0;">09:00</div><div class="t" style="left:129.90px;top:640.15px;font-size:10.3px;font-weight:400;color:#333333;letter-spacing:0.000px;transform:scaleX(0.8456);transform-origin:0 0;">10:00</div><div class="t" style="left:129.90px;top:654.56px;font-size:10.3px;font-weight:400;color:#333333;letter-spacing:0.000px;transform:scaleX(0.8715);transform-origin:0 0;">11:00</div><div class="t" style="left:129.90px;top:668.97px;font-size:10.3px;font-weight:400;color:#333333;letter-spacing:0.000px;transform:scaleX(0.8456);transform-origin:0 0;">12:00</div><div class="t" style="left:129.90px;top:683.38px;font-size:10.3px;font-weight:400;color:#333333;letter-spacing:0.000px;transform:scaleX(0.8456);transform-origin:0 0;">13:00</div><div class="t" style="left:129.90px;top:697.79px;font-size:10.3px;font-weight:400;color:#333333;letter-spacing:0.000px;transform:scaleX(0.8456);transform-origin:0 0;">14:00</div><div class="t" style="left:129.90px;top:712.20px;font-size:10.3px;font-weight:400;color:#333333;letter-spacing:0.000px;transform:scaleX(0.8456);transform-origin:0 0;">15:00</div><div class="t" style="left:129.90px;top:726.61px;font-size:10.3px;font-weight:400;color:#333333;letter-spacing:0.000px;transform:scaleX(0.8456);transform-origin:0 0;">16:00</div><div class="t" style="left:129.90px;top:741.02px;font-size:10.3px;font-weight:400;color:#333333;letter-spacing:0.000px;transform:scaleX(0.8456);transform-origin:0 0;">17:00</div><div class="t" style="left:129.90px;top:755.43px;font-size:10.3px;font-weight:400;color:#333333;letter-spacing:0.000px;transform:scaleX(0.8456);transform-origin:0 0;">18:00</div><div class="t" style="left:129.90px;top:769.84px;font-size:10.3px;font-weight:400;color:#333333;letter-spacing:0.000px;transform:scaleX(0.8456);transform-origin:0 0;">19:00</div><div class="t" style="left:129.90px;top:784.25px;font-size:10.3px;font-weight:400;color:#333333;letter-spacing:0.000px;transform:scaleX(0.8456);transform-origin:0 0;">20:00</div><div class="t" style="left:129.90px;top:798.66px;font-size:10.3px;font-weight:400;color:#333333;letter-spacing:0.000px;transform:scaleX(0.8456);transform-origin:0 0;">21:00</div><div class="t" style="left:129.90px;top:813.07px;font-size:10.3px;font-weight:400;color:#333333;letter-spacing:0.000px;transform:scaleX(0.8456);transform-origin:0 0;">22:00</div><div class="t" style="left:129.90px;top:827.48px;font-size:10.3px;font-weight:400;color:#333333;letter-spacing:0.000px;transform:scaleX(0.8456);transform-origin:0 0;">23:00</div><div class="t" style="left:364.90px;top:496.05px;font-size:10.3px;font-weight:400;color:#333333;letter-spacing:0.000px;transform:scaleX(0.8456);transform-origin:0 0;">00:00</div><div class="t" style="left:364.90px;top:510.46px;font-size:10.3px;font-weight:400;color:#333333;letter-spacing:0.000px;transform:scaleX(0.8456);transform-origin:0 0;">01:00</div><div class="t" style="left:364.90px;top:524.87px;font-size:10.3px;font-weight:400;color:#333333;letter-spacing:0.000px;transform:scaleX(0.8456);transform-origin:0 0;">02:00</div><div class="t" style="left:364.90px;top:539.28px;font-size:10.3px;font-weight:400;color:#333333;letter-spacing:0.000px;transform:scaleX(0.8456);transform-origin:0 0;">03:00</div><div class="t" style="left:364.90px;top:553.69px;font-size:10.3px;font-weight:400;color:#333333;letter-spacing:0.000px;transform:scaleX(0.8456);transform-origin:0 0;">04:00</div><div class="t" style="left:364.90px;top:568.10px;font-size:10.3px;font-weight:400;color:#333333;letter-spacing:0.000px;transform:scaleX(0.8456);transform-origin:0 0;">05:00</div><div class="t" style="left:364.90px;top:582.51px;font-size:10.3px;font-weight:400;color:#333333;letter-spacing:0.000px;transform:scaleX(0.8456);transform-origin:0 0;">06:00</div><div class="t" style="left:364.90px;top:596.92px;font-size:10.3px;font-weight:400;color:#333333;letter-spacing:0.000px;transform:scaleX(0.8456);transform-origin:0 0;">07:00</div><div class="t" style="left:364.90px;top:611.33px;font-size:10.3px;font-weight:400;color:#333333;letter-spacing:0.000px;transform:scaleX(0.8456);transform-origin:0 0;">08:00</div><div class="t" style="left:364.90px;top:625.74px;font-size:10.3px;font-weight:400;color:#333333;letter-spacing:0.000px;transform:scaleX(0.8456);transform-origin:0 0;">09:00</div><div class="t" style="left:364.90px;top:640.15px;font-size:10.3px;font-weight:400;color:#333333;letter-spacing:0.000px;transform:scaleX(0.8456);transform-origin:0 0;">10:00</div><div class="t" style="left:364.90px;top:654.56px;font-size:10.3px;font-weight:400;color:#333333;letter-spacing:0.000px;transform:scaleX(0.8715);transform-origin:0 0;">11:00</div><div class="t" style="left:364.90px;top:668.97px;font-size:10.3px;font-weight:400;color:#333333;letter-spacing:0.000px;transform:scaleX(0.8456);transform-origin:0 0;">12:00</div><div class="t" style="left:364.90px;top:683.38px;font-size:10.3px;font-weight:400;color:#333333;letter-spacing:0.000px;transform:scaleX(0.8456);transform-origin:0 0;">13:00</div><div class="t" style="left:364.90px;top:697.79px;font-size:10.3px;font-weight:400;color:#333333;letter-spacing:0.000px;transform:scaleX(0.8456);transform-origin:0 0;">14:00</div><div class="t" style="left:364.90px;top:712.20px;font-size:10.3px;font-weight:400;color:#333333;letter-spacing:0.000px;transform:scaleX(0.8456);transform-origin:0 0;">15:00</div><div class="t" style="left:364.90px;top:726.61px;font-size:10.3px;font-weight:400;color:#333333;letter-spacing:0.000px;transform:scaleX(0.8456);transform-origin:0 0;">16:00</div><div class="t" style="left:364.90px;top:741.02px;font-size:10.3px;font-weight:400;color:#333333;letter-spacing:0.000px;transform:scaleX(0.8456);transform-origin:0 0;">17:00</div><div class="t" style="left:364.90px;top:755.43px;font-size:10.3px;font-weight:400;color:#333333;letter-spacing:0.000px;transform:scaleX(0.8456);transform-origin:0 0;">18:00</div><div class="t" style="left:364.90px;top:769.84px;font-size:10.3px;font-weight:400;color:#333333;letter-spacing:0.000px;transform:scaleX(0.8456);transform-origin:0 0;">19:00</div><div class="t" style="left:364.90px;top:784.25px;font-size:10.3px;font-weight:400;color:#333333;letter-spacing:0.000px;transform:scaleX(0.8456);transform-origin:0 0;">20:00</div><div class="t" style="left:364.90px;top:798.66px;font-size:10.3px;font-weight:400;color:#333333;letter-spacing:0.000px;transform:scaleX(0.8456);transform-origin:0 0;">21:00</div><div class="t" style="left:364.90px;top:813.07px;font-size:10.3px;font-weight:400;color:#333333;letter-spacing:0.000px;transform:scaleX(0.8456);transform-origin:0 0;">22:00</div><div class="t" style="left:364.90px;top:827.48px;font-size:10.3px;font-weight:400;color:#333333;letter-spacing:0.000px;transform:scaleX(0.8456);transform-origin:0 0;">23:00</div><div class="t" style="left:615.70px;top:463.81px;font-size:9.5px;font-weight:400;color:#444;letter-spacing:0.000px;">4</div><div class="t" style="left:615.70px;top:497.64px;font-size:9.5px;font-weight:400;color:#444;letter-spacing:0.000px;">3</div><div class="t" style="left:615.70px;top:531.46px;font-size:9.5px;font-weight:400;color:#444;letter-spacing:0.000px;">2</div><div class="t" style="left:615.70px;top:565.29px;font-size:9.5px;font-weight:400;color:#444;letter-spacing:0.000px;">1</div><div class="t" style="left:615.70px;top:599.11px;font-size:9.5px;font-weight:400;color:#444;letter-spacing:0.000px;">0</div><div class="t" style="left:665.20px;top:617.70px;font-size:10px;font-weight:400;color:#444;letter-spacing:0.000px;transform:scaleX(0.9313);transform-origin:0 0;">05 Feb</div><div class="t" style="left:716.20px;top:617.70px;font-size:10px;font-weight:400;color:#444;letter-spacing:0.000px;transform:scaleX(0.9313);transform-origin:0 0;">09 Feb</div><div class="t" style="left:767.20px;top:617.70px;font-size:10px;font-weight:400;color:#444;letter-spacing:0.000px;transform:scaleX(0.9313);transform-origin:0 0;">13 Feb</div><div class="t" style="left:818.20px;top:617.70px;font-size:10px;font-weight:400;color:#444;letter-spacing:0.000px;transform:scaleX(0.9313);transform-origin:0 0;">17 Feb</div><div class="t" style="left:869.20px;top:617.70px;font-size:10px;font-weight:400;color:#444;letter-spacing:0.000px;transform:scaleX(0.9313);transform-origin:0 0;">21 Feb</div><div class="t" style="left:920.20px;top:617.70px;font-size:10px;font-weight:400;color:#444;letter-spacing:0.000px;transform:scaleX(0.9313);transform-origin:0 0;">25 Feb</div><div class="t" style="left:608.50px;top:757.39px;font-size:9.4px;font-weight:400;color:#444;letter-spacing:0.000px;transform:scaleX(0.9428);transform-origin:0 0;">8.0</div><div class="t" style="left:608.50px;top:790.94px;font-size:9.4px;font-weight:400;color:#444;letter-spacing:0.000px;transform:scaleX(0.9428);transform-origin:0 0;">6.0</div><div class="t" style="left:608.50px;top:824.49px;font-size:9.4px;font-weight:400;color:#444;letter-spacing:0.000px;transform:scaleX(0.9428);transform-origin:0 0;">4.0</div>
</body></html>
